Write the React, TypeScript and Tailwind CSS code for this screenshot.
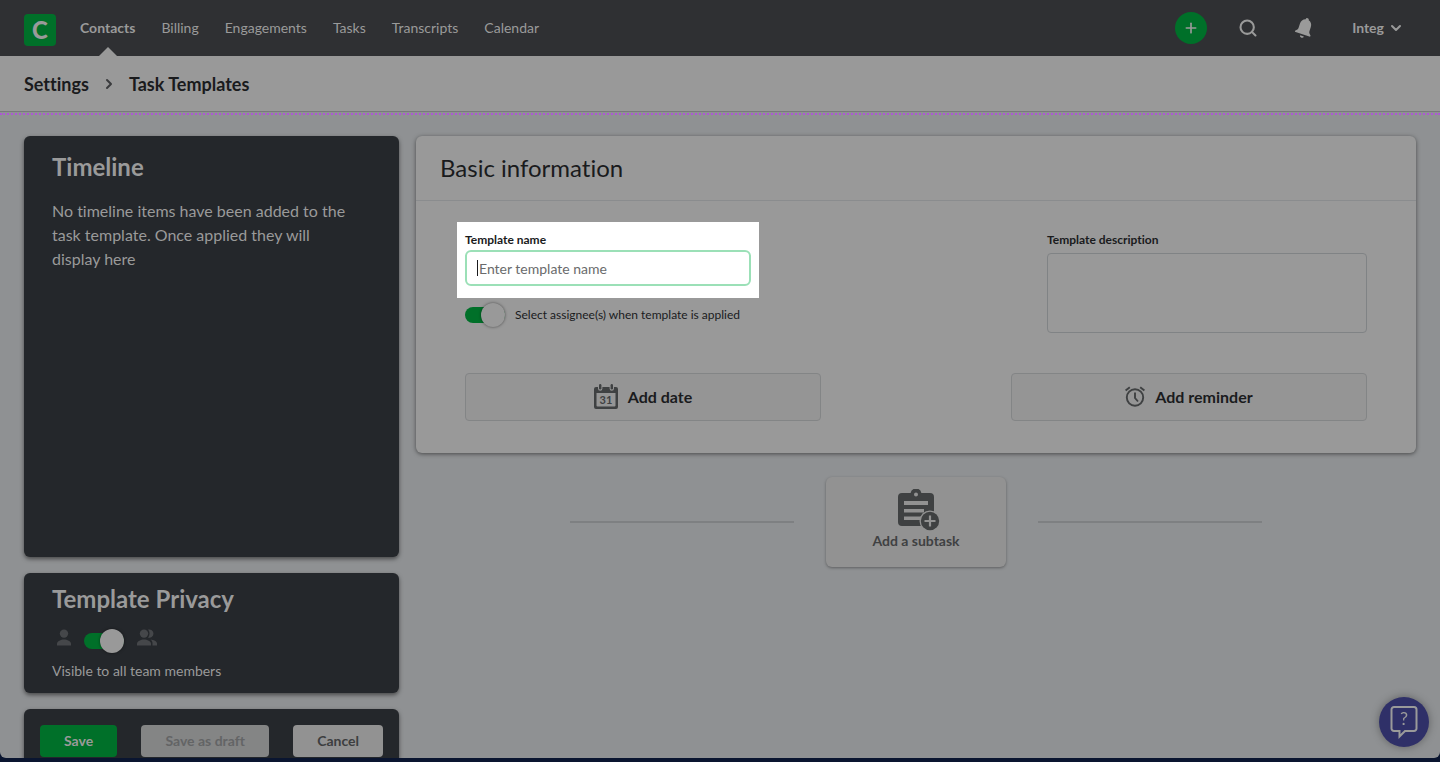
import { useState } from "react";
import type { ReactNode } from "react";
import { ChevronDown, ChevronRight, Plus, Search } from "lucide-react";

const NAV_ITEMS = ["Contacts", "Billing", "Engagements", "Tasks", "Transcripts", "Calendar"];

function BellIcon() {
  return (
    <svg width="24" height="24" viewBox="0 0 24 24" fill="currentColor" aria-hidden="true">
      <g transform="rotate(18 12 12)">
        <path d="M12.500 1.500a1.600 1.600 0 0 0-1.600 1.700C8.200 4 6.800 6.200 6.800 9v4.500c0 1.400-.9 2.600-2.300 3.500v1.500h16V17c-1.400-.9-2.300-2.100-2.300-3.500V9c0-2.800-1.400-5-4.100-5.800a1.600 1.600 0 0 0-1.600-1.700z" />
        <path d="M10.500 20h4a2 2 0 0 1-4 0z" />
      </g>
    </svg>
  );
}

function CalendarIcon() {
  return (
    <svg width="24" height="26" viewBox="0 0 24 26" aria-hidden="true">
      <path
        fill="currentColor"
        fillRule="evenodd"
        d="M2 3h2v1.500a2.200 2.200 0 0 0 4.400 0V3h7.200v1.500a2.200 2.200 0 0 0 4.400 0V3h2a2 2 0 0 1 2 2v18a2 2 0 0 1-2 2H2a2 2 0 0 1-2-2V5a2 2 0 0 1 2-2zm.500 6v12.500a1 1 0 0 0 1 1h17a1 1 0 0 0 1-1V9z"
      />
      <rect x="5" y="0" width="2.400" height="5.500" rx="1.200" fill="currentColor" />
      <rect x="16.600" y="0" width="2.400" height="5.500" rx="1.200" fill="currentColor" />
      <text x="12" y="20" textAnchor="middle" fontSize="11" fontWeight="700" fill="currentColor">
        31
      </text>
    </svg>
  );
}

function AlarmIcon() {
  return (
    <svg
      width="20"
      height="22"
      viewBox="0 0 20 22"
      fill="none"
      stroke="currentColor"
      strokeWidth="1.900"
      aria-hidden="true"
    >
      <circle cx="10" cy="11.500" r="8.200" />
      <path d="M10 6.500v5.500l3 3.500M.600 4.600l4.200-3.400M19.400 4.600l-4.200-3.400" />
    </svg>
  );
}

function SubtaskIcon() {
  return (
    <svg width="42" height="42" viewBox="0 0 42 42" aria-hidden="true">
      <path
        fill="currentColor"
        fillRule="evenodd"
        d="M4 4h8.600a5.500 5.500 0 0 1 10.800 0H32a4 4 0 0 1 4 4v25a4 4 0 0 1-4 4H4a4 4 0 0 1-4-4V8a4 4 0 0 1 4-4zm14-.5a2 2 0 1 0 0 4 2 2 0 0 0 0-4zM6 12v4h24v-4zm0 8v3.500h20V20zm0 7.500V31h17v-3.500z"
      />
      <circle cx="32" cy="32" r="10.500" fill="#929292" />
      <circle cx="32" cy="32" r="9.200" fill="currentColor" />
      <path d="M32 26.500v11M26.500 32h11" stroke="#929292" strokeWidth="2.200" />
    </svg>
  );
}

function PersonIcon() {
  return (
    <svg width="16" height="18" viewBox="0 0 16 18" fill="currentColor" aria-hidden="true">
      <circle cx="8" cy="4.600" r="4.200" />
      <path d="M1 16.500v-2c0-2.300 4-4 7-4s7 1.700 7 4v2z" />
    </svg>
  );
}

function PeopleIcon() {
  return (
    <svg width="22" height="18" viewBox="0 0 22 18" fill="currentColor" aria-hidden="true">
      <circle cx="8" cy="4.600" r="4.200" />
      <path d="M1 16.500v-2c0-2.300 4-4 7-4s7 1.700 7 4v2z" />
      <path d="M12 .600a4.200 4.200 0 1 1 0 8 6 6 0 0 0 0-8zM14.500 10.500c3 .300 6.500 1.800 6.500 4v2h-4.500v-2c0-1.600-.7-2.900-2-4z" />
    </svg>
  );
}

function HelpIcon() {
  return (
    <svg width="28" height="34" viewBox="0 0 28 34" aria-hidden="true">
      <path
        d="M4 2h20a2.500 2.500 0 0 1 2.500 2.500v19A2.500 2.500 0 0 1 24 26H15l-5.500 5.500V26H4a2.500 2.500 0 0 1-2.500-2.500v-19A2.500 2.500 0 0 1 4 2z"
        fill="none"
        stroke="currentColor"
        strokeWidth="2"
      />
      <text x="14" y="20" textAnchor="middle" fontSize="18" fill="currentColor">
        ?
      </text>
    </svg>
  );
}

interface ToggleProps {
  id: string;
  label?: string;
  checked: boolean;
  onChange: (checked: boolean) => void;
}

function Toggle({ id, label, checked, onChange }: ToggleProps) {
  return (
    <input
      id={id}
      type="checkbox"
      aria-label={label}
      checked={checked}
      onChange={(e) => onChange(e.target.checked)}
      className="relative block h-4 w-10 shrink-0 cursor-pointer appearance-none rounded-full bg-[#6b6b6b] checked:bg-[#007029] before:absolute before:-top-1 before:left-0 before:size-6 before:rounded-full before:bg-[#999999] before:shadow-[0_0_3px_rgba(0,0,0,0.5)] checked:before:left-4"
    />
  );
}

function DarkCard({ className, children }: { className: string; children: ReactNode }) {
  return (
    <section className={`rounded-md bg-[#24272b] text-[#9a9a9a] shadow-[0_2px_4px_rgba(0,0,0,0.5)] ${className}`}>
      {children}
    </section>
  );
}

export default function App() {
  const [askAssignee, setAskAssignee] = useState(true);
  const [visibleToAll, setVisibleToAll] = useState(true);

  return (
    <div className="h-screen overflow-hidden bg-[#0a1530] pb-1 font-['Lato',sans-serif] text-[#1a1b1d] [font-variant-ligatures:none]">
      <div className="flex h-full flex-col overflow-hidden rounded-b-md bg-[#8f9193]">
        <header className="flex h-14 shrink-0 items-center bg-[#2f3033] px-6 text-[#9a9a9a]">
          <a
            href="#"
            aria-label="Home"
            className="mt-1 mr-6 flex size-8 items-center justify-center rounded bg-[#007029] text-2xl font-black"
          >
            C
          </a>
          <nav className="flex h-full gap-[26px] text-sm">
            {NAV_ITEMS.map((item) => (
              <a
                key={item}
                href="#"
                className={item === "Contacts" ? "relative flex items-center font-bold" : "flex items-center"}
              >
                {item}
                {item === "Contacts" && (
                  <span className="absolute bottom-0 left-1/2 -translate-x-1/2 border-x-9 border-b-9 border-x-transparent border-b-[#999999]" />
                )}
              </a>
            ))}
          </nav>
          <div className="mr-3 ml-auto flex items-center">
            <button
              type="button"
              aria-label="Add"
              className="mr-[31px] flex size-8 items-center justify-center rounded-full bg-[#007029]"
            >
              <Plus size={16} strokeWidth={2.5} />
            </button>
            <button type="button" aria-label="Search" className="mr-[34px]">
              <Search size={20} strokeWidth={2.5} />
            </button>
            <button type="button" aria-label="Notifications" className="mr-9">
              <BellIcon />
            </button>
            <button type="button" className="flex items-center gap-1 text-sm font-bold">
              Integ
              <ChevronDown size={16} strokeWidth={3} />
            </button>
          </div>
        </header>

        <div className="flex h-14 shrink-0 items-center gap-3 border-b border-[#77797b] bg-[#999999] px-6 text-lg font-bold">
          <a href="#">Settings</a>
          <ChevronRight size={16} strokeWidth={3} className="text-[#3a3b3d]" />
          <h1>Task Templates</h1>
        </div>
        <div className="shrink-0 border-b-2 border-dotted border-[#ac58d4] pt-px" />

        <div className="flex min-h-0 flex-1 gap-[17px] px-6 pt-[21px]">
          <aside className="flex w-96 max-w-[375px] shrink-0 flex-col gap-4">
            <DarkCard className="h-[421px] shrink-0 px-7 pt-[15px]">
              <h2 className="text-2xl leading-8 font-bold">Timeline</h2>
              <p className="mt-4 pr-4 text-base leading-6">
                No timeline items have been added to the task template. Once applied they will display here
              </p>
            </DarkCard>
            <DarkCard className="h-[120px] shrink-0 px-7 pt-2">
              <h2 className="text-2xl leading-9 font-bold">Template Privacy</h2>
              <div className="mt-3 flex items-start gap-3 pl-1 text-[#45474a]">
                <PersonIcon />
                <div className="pt-1">
                  <Toggle
                    id="privacy"
                    label="Visible to all team members"
                    checked={visibleToAll}
                    onChange={setVisibleToAll}
                  />
                </div>
                <PeopleIcon />
              </div>
              <p className="mt-3 text-sm leading-5">Visible to all team members</p>
            </DarkCard>
            <DarkCard className="flex shrink-0 justify-between p-4 text-sm font-bold">
              <button type="button" className="h-8 rounded bg-[#007029] px-6">
                Save
              </button>
              <button type="button" className="h-8 rounded bg-[#848585] px-6 text-[#636465]">
                Save as draft
              </button>
              <button type="button" className="h-8 rounded bg-[#929292] px-6 text-[#3d3e3f]">
                Cancel
              </button>
            </DarkCard>
          </aside>

          <main className="min-w-0 flex-1">
            <section className="rounded-md bg-[#999999] shadow-[0_1px_4px_rgba(0,0,0,0.5)]">
              <h2 className="border-b border-[#8a8c8e] px-6 py-4 text-2xl leading-8">Basic information</h2>
              <div className="px-[49px] pt-[21px] pb-8">
                <div className="flex items-start justify-between">
                  <div>
                    <div className="-ml-2 w-[302px] bg-white px-2 pt-2 pb-3">
                      <label htmlFor="template-name" className="block text-xs leading-5 font-bold">
                        Template name
                      </label>
                      <div className="relative">
                        <input
                          id="template-name"
                          type="text"
                          placeholder="Enter template name"
                          className="block h-9 w-full rounded-md border-2 border-[#9be0b7] px-3 text-sm outline-none placeholder:text-[#6a6b6c]"
                        />
                        <span className="absolute top-2.5 left-3 h-4 w-px bg-[#1a1b1d]" />
                      </div>
                    </div>
                    <div className="mt-[9px] flex items-center gap-2.5">
                      <Toggle id="ask-assignee" checked={askAssignee} onChange={setAskAssignee} />
                      <label htmlFor="ask-assignee" className="text-xs leading-4">
                        Select assignee(s) when template is applied
                      </label>
                    </div>
                  </div>
                  <div className="w-80 pt-2">
                    <label htmlFor="template-description" className="block text-xs leading-5 font-bold">
                      Template description
                    </label>
                    <textarea
                      id="template-description"
                      className="mt-[3px] block h-20 w-full resize-none rounded border border-[#808385]"
                    />
                  </div>
                </div>
                <div className="mt-10 flex justify-between text-base font-bold">
                  <button
                    type="button"
                    className="flex h-12 w-[356px] items-center justify-center gap-2.5 rounded border border-[#838586] bg-[#959595]"
                  >
                    <span className="text-[#3f4142]">
                      <CalendarIcon />
                    </span>
                    Add date
                  </button>
                  <button
                    type="button"
                    className="flex h-12 w-[356px] items-center justify-center gap-2.5 rounded border border-[#838586] bg-[#959595]"
                  >
                    <span className="text-[#3f4142]">
                      <AlarmIcon />
                    </span>
                    Add reminder
                  </button>
                </div>
              </div>
            </section>

            <div className="mt-6 flex items-center justify-center gap-8">
              <hr className="w-56 border-t-2 border-[#7e8082]" />
              <button
                type="button"
                className="flex h-[90px] w-[180px] flex-col items-center rounded-md bg-[#929292] pt-3 text-sm font-bold text-[#3f4142] shadow-[0_1px_3px_rgba(0,0,0,0.35)]"
              >
                <span className="pl-1.5">
                  <SubtaskIcon />
                </span>
                Add a subtask
              </button>
              <hr className="w-56 border-t-2 border-[#7e8082]" />
            </div>
          </main>
        </div>
      </div>

      <button
        type="button"
        aria-label="Help"
        className="fixed right-[11px] bottom-[15px] flex size-[50px] items-center justify-center rounded-full bg-[#2f3068] text-[#9a9a9a] shadow-[0_0_8px_rgba(0,0,0,0.35)]"
      >
        <HelpIcon />
      </button>
    </div>
  );
}
